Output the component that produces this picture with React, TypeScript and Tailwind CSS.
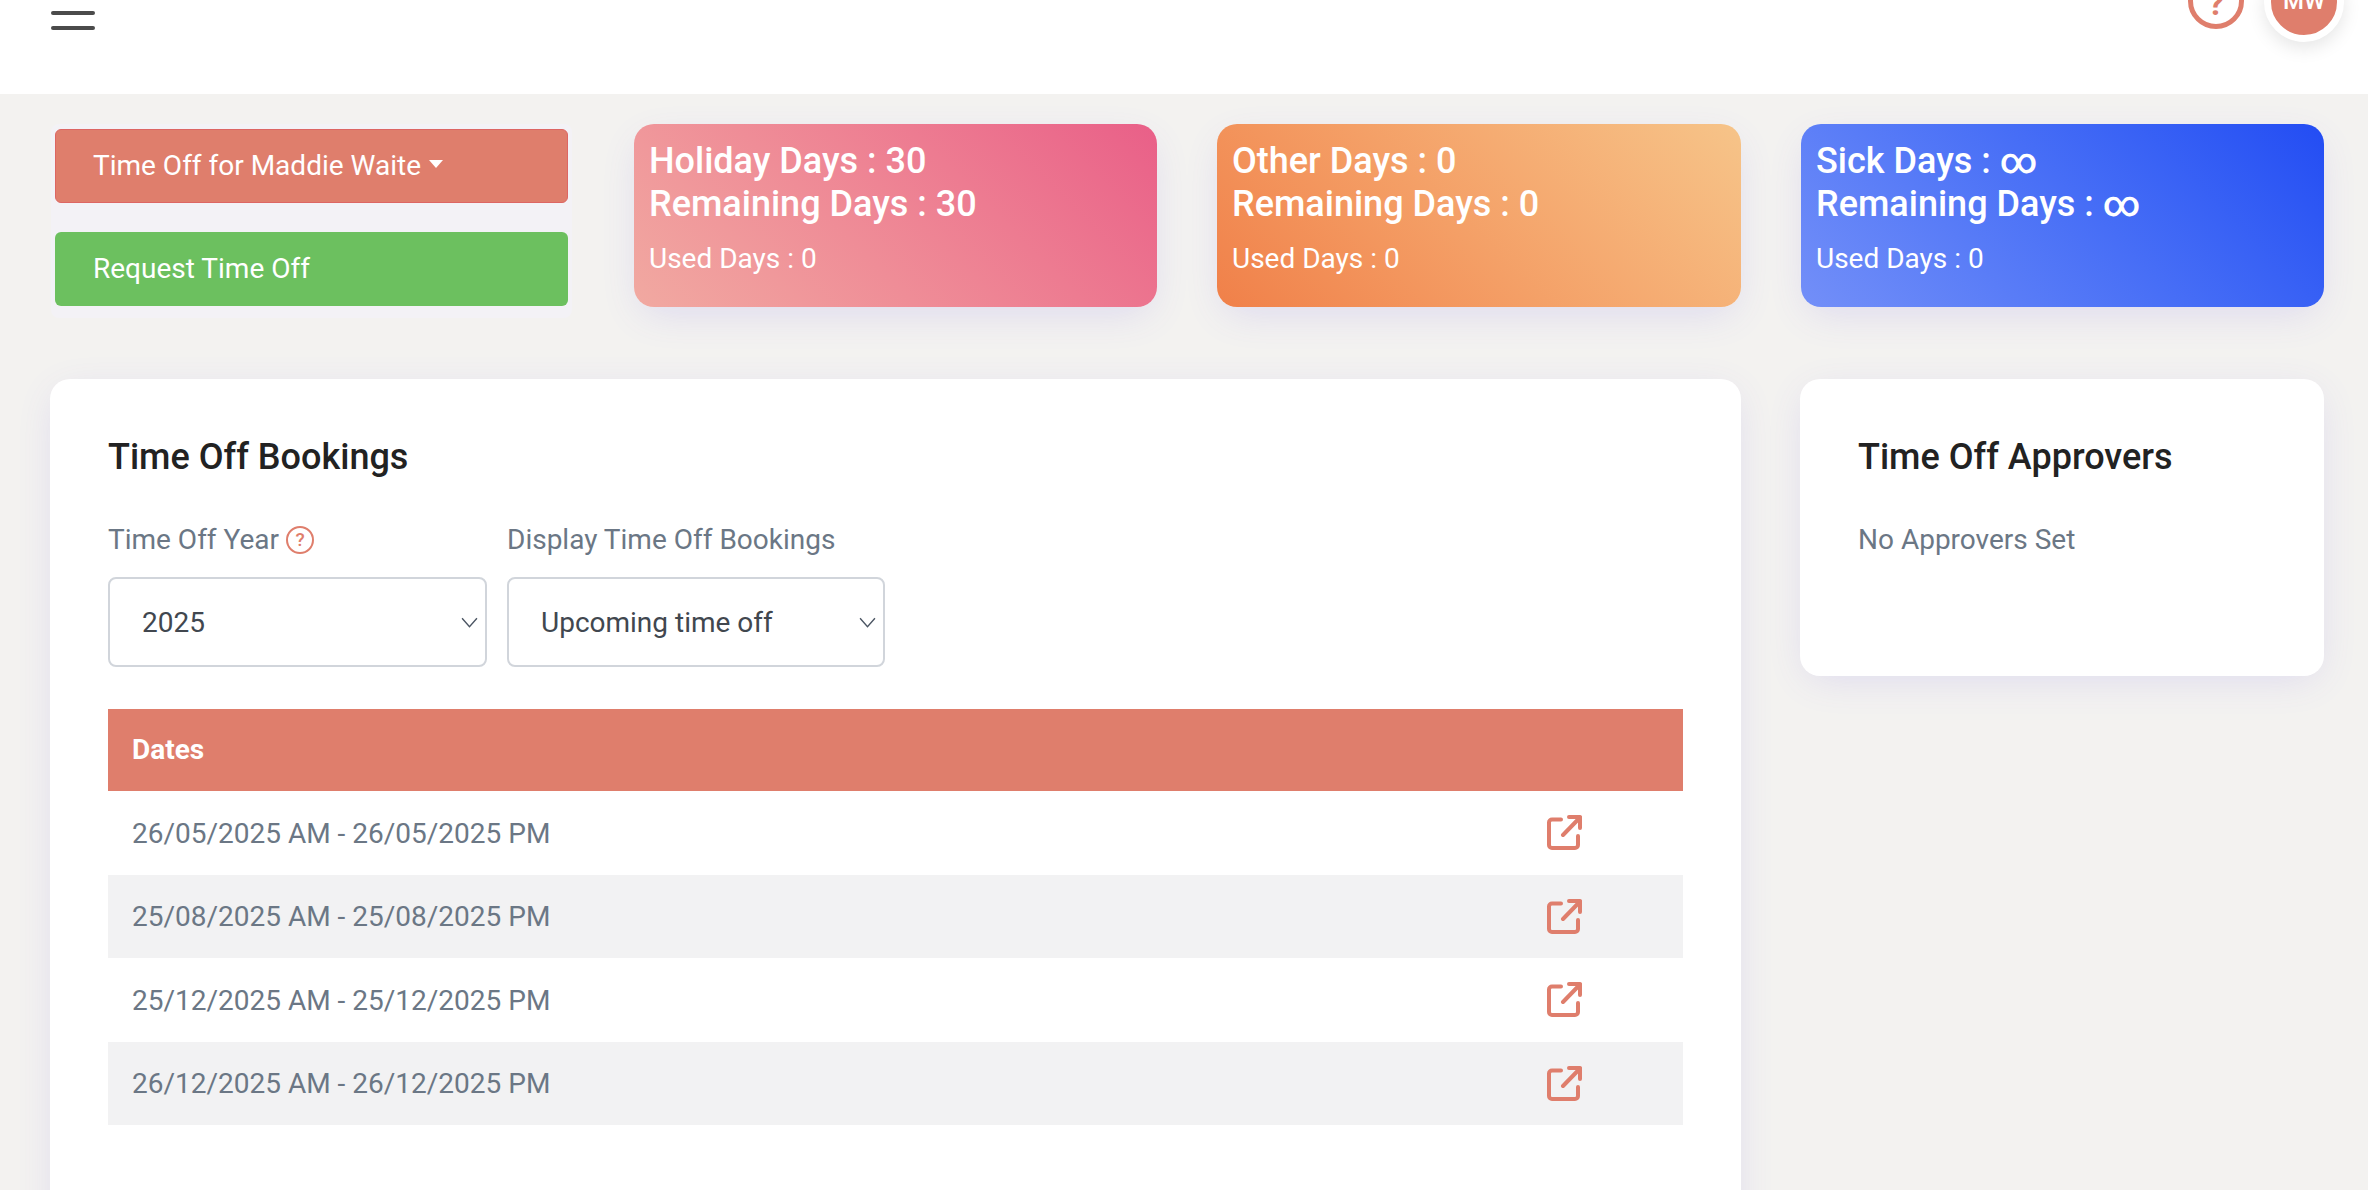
import React from 'react';

const bookings = [
  '26/05/2025 AM - 26/05/2025 PM',
  '25/08/2025 AM - 25/08/2025 PM',
  '25/12/2025 AM - 25/12/2025 PM',
  '26/12/2025 AM - 26/12/2025 PM',
];

function Chevron() {
  return (
    <svg viewBox="0 0 16 10" className="w-[17px] h-[11px]" fill="none" stroke="#4b5563" strokeWidth="1.3">
      <path d="M1 1l7 8 7-8" />
    </svg>
  );
}

function OpenIcon() {
  return (
    <svg viewBox="0 0 35 35" className="w-[35px] h-[35px]" fill="none" stroke="#df7e6c" strokeWidth="4" strokeLinecap="round" strokeLinejoin="round">
      <path d="M14 4.5H5a3 3 0 0 0-3 3V30a3 3 0 0 0 3 3h23a3 3 0 0 0 3-3v-9" />
      <path d="M16 20L33 2.5" />
      <path d="M22 2h11v11" />
    </svg>
  );
}

function StatCard({ title, remaining, used, gradient }: { title: string; remaining: string; used: string; gradient: string }) {
  return (
    <div className={`h-[183px] rounded-[20px] pl-[15px] pt-[16px] text-white shadow-[0_12px_40px_-8px_rgba(100,80,230,0.16)] ${gradient}`}>
      <div className="text-[36px] leading-[43px] font-medium">{title}</div>
      <div className="text-[36px] leading-[43px] font-medium">{remaining}</div>
      <div className="text-[28px] leading-[32px] mt-[17px]">{used}</div>
    </div>
  );
}

function Select({ value, width }: { value: string; width: string }) {
  return (
    <div className={`h-[90px] ${width} rounded-[8px] border-2 border-[#d1d5db] bg-white flex items-center justify-between pl-[32px] pr-[7px] text-[28px] text-[#41474f]`}>
      <span className="pt-[2px]">{value}</span>
      <Chevron />
    </div>
  );
}

export default function App() {
  return (
    <div className="h-[1190px] overflow-hidden bg-[#f3f2f0] font-['Roboto',sans-serif]">
      {/* Top bar */}
      <div className="h-[94px] bg-white flex justify-between overflow-hidden pl-[51px] pr-[24px]">
        <div className="flex flex-col gap-[11px] w-[44px] mt-[11px]">
          <div className="h-[4px] rounded-full bg-[#4b4b4b]" />
          <div className="h-[4px] rounded-full bg-[#4b4b4b]" />
        </div>
        <div className="flex gap-[20px] mt-[-38px]">
          <div className="w-[56px] h-[67px] rounded-full border-[5px] border-[#df7e6c] flex items-center justify-center text-[#df7e6c] font-bold text-[34px] pt-[16px]">?</div>
          <div className="w-[80px] h-[80px] rounded-full border-[7px] border-white bg-[#df7e6c] flex items-end justify-center text-white text-[24px] font-medium pb-[16px] shadow-[0_6px_18px_rgba(0,0,0,0.1)]">MW</div>
        </div>
      </div>

      {/* Summary row */}
      <div className="flex pt-[30px] pl-[51px]">
        <div className="w-[521px] h-[194px] bg-[#f3f2f6] rounded-[8px] px-[4px] pt-[5px] flex flex-col gap-[29px] mr-[62px]">
          <div className="h-[74px] rounded-[6px] bg-[#df7e6c] border border-[#dd6663] flex items-center pl-[37px] text-white text-[28px]">
            Time Off for Maddie Waite
            <span className="ml-[8px] mb-[5px] w-0 h-0 border-x-[7px] border-x-transparent border-t-[8px] border-t-white" />
          </div>
          <div className="h-[74px] rounded-[6px] bg-[#6cc05f] flex items-center pl-[38px] text-white text-[28px]">Request Time Off</div>
        </div>
        <div className="flex gap-[60px]">
          <div className="w-[523px]">
            <StatCard title="Holiday Days : 30" remaining="Remaining Days : 30" used="Used Days : 0" gradient="bg-linear-45 from-[#f1a9a1] to-[#e95f88]" />
          </div>
          <div className="w-[524px]">
            <StatCard title="Other Days : 0" remaining="Remaining Days : 0" used="Used Days : 0" gradient="bg-linear-45 from-[#f08049] to-[#f6c489]" />
          </div>
          <div className="w-[523px]">
            <StatCard title="Sick Days : ∞" remaining="Remaining Days : ∞" used="Used Days : 0" gradient="bg-linear-45 from-[#738ff8] to-[#234cf3]" />
          </div>
        </div>
      </div>

      {/* Main content */}
      <div className="flex gap-[59px] pl-[50px] mt-[61px]">
        <div className="w-[1691px] h-[900px] bg-white rounded-[20px] px-[58px] pt-[58px] shadow-[0_8px_40px_-8px_rgba(100,80,230,0.16)]">
          <h2 className="text-[36px] leading-[40px] font-medium text-[#222222]">Time Off Bookings</h2>
          <div className="flex gap-[20px] mt-[47px]">
            <div>
              <div className="h-[32px] flex items-center gap-[7px] text-[28px] text-[#6b7785]">
                Time Off Year
                <span className="w-[28px] h-[28px] rounded-full border-2 border-[#df7e6c] flex items-center justify-center text-[#df7e6c] text-[19px] font-medium">?</span>
              </div>
              <div className="mt-[21px]"><Select value="2025" width="w-[379px]" /></div>
            </div>
            <div>
              <div className="h-[32px] flex items-center text-[28px] text-[#6b7785]">Display Time Off Bookings</div>
              <div className="mt-[21px]"><Select value="Upcoming time off" width="w-[378px]" /></div>
            </div>
          </div>
          <table className="w-[1575px] mt-[42px] border-collapse">
            <thead>
              <tr className="h-[82px] bg-[#df7e6c]">
                <th className="text-left pl-[24px] text-white text-[28px] font-bold">Dates</th>
                <th className="w-[100px]" />
              </tr>
            </thead>
            <tbody>
              {bookings.map((b, i) => (
                <tr key={b} className={`h-[83.5px] ${i % 2 === 1 ? 'bg-[#f2f2f3]' : 'bg-white'}`}>
                  <td className="pl-[24px] pt-[2px] text-[28px] text-[#6b7785]">{b}</td>
                  <td className="pr-[101px]"><OpenIcon /></td>
                </tr>
              ))}
            </tbody>
          </table>
        </div>
        <div className="w-[524px] h-[297px] bg-white rounded-[20px] px-[58px] pt-[58px] shadow-[0_8px_40px_-8px_rgba(100,80,230,0.16)]">
          <h2 className="text-[36px] leading-[40px] font-medium text-[#222222]">Time Off Approvers</h2>
          <div className="mt-[47px] h-[32px] flex items-center text-[28px] text-[#6b7785]">No Approvers Set</div>
        </div>
      </div>
    </div>
  );
}
